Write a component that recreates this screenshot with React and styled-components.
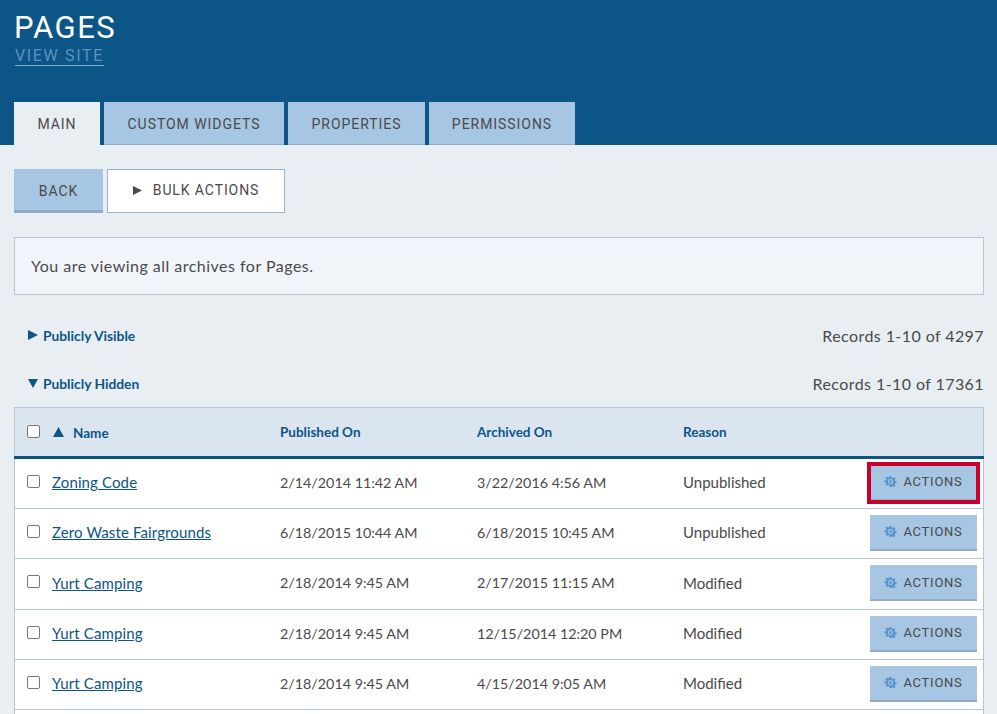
import styled, { createGlobalStyle } from "styled-components";

const GlobalStyle = createGlobalStyle`
  html, body {
    margin: 0;
    height: 714px;
    overflow: hidden;
    background: #e9eef2;
    font-family: Lato, "Liberation Sans", sans-serif;
    color: #4a4a4a;
  }
`;

const Header = styled.header`
  background: #0b5587;
  height: 145px;
  padding: 14px 14px 0;
  box-sizing: border-box;
  display: flex;
  flex-direction: column;
`;

const Title = styled.h1`
  margin: 0;
  font: 400 31px/28px Roboto, sans-serif;
  letter-spacing: 1.5px;
  color: #fff;
`;

const ViewSite = styled.a`
  align-self: flex-start;
  margin: 4px 0 0 1px;
  font: 400 16px/19px Roboto, sans-serif;
  letter-spacing: 1.65px;
  color: #5d93bd;
  border-bottom: 1px solid #7ba9cc;
`;

const Tabs = styled.nav`
  margin-top: auto;
  display: flex;
  gap: 4px;
`;

const Tab = styled.a`
  height: 43px;
  box-sizing: border-box;
  width: ${(p) => p.$width}px;
  padding-top: 2px;
  display: flex;
  align-items: center;
  justify-content: center;
  font: 400 14px/1 Roboto, sans-serif;
  letter-spacing: 0.95px;
  color: #4a4a4a;
  background: ${(p) => (p.$active ? "#e9eef2" : "#a7c6e3")};
  border-bottom: 1px solid ${(p) => (p.$active ? "#e9eef2" : "#93abc7")};
`;

const Main = styled.main`
  padding: 24px 13px 0 14px;
`;

const Toolbar = styled.div`
  display: flex;
  gap: 4px;
`;

const BackButton = styled.button`
  width: 89px;
  height: 44px;
  border: 0;
  border-bottom: 3px solid #8fabc8;
  background: #a7c6e3;
  font: 400 14px/1 Roboto, sans-serif;
  letter-spacing: 1px;
  color: #4a4a4a;
  padding: 2px 0 0;
`;

const BulkButton = styled.button`
  width: 178px;
  height: 44px;
  border: 1px solid #a3b3c6;
  background: #fff;
  font: 400 14px/1 Roboto, sans-serif;
  letter-spacing: 0.9px;
  color: #4a4a4a;
  padding: 0 0 2px;
  display: flex;
  align-items: center;
  justify-content: center;
  gap: 11px;
`;

const Notice = styled.div`
  margin-top: 24px;
  height: 58px;
  box-sizing: border-box;
  border: 1px solid #b4c5d6;
  background: #f1f5f9;
  padding: 0 16px 2px;
  display: flex;
  align-items: center;
  font-size: 16px;
  letter-spacing: 0.48px;
`;

const Section = styled.div`
  display: flex;
  justify-content: space-between;
  align-items: center;
  height: 24px;
  margin-top: ${(p) => p.$top}px;
`;

const SectionToggle = styled.a`
  display: flex;
  align-items: center;
  gap: 5px;
  margin-left: 14px;
  color: #0b5587;
  font-size: 13.8px;
  font-weight: 700;
`;

const RecordCount = styled.span`
  font-size: 16px;
  letter-spacing: 0.42px;
`;

const Table = styled.table`
  margin-top: 12px;
  width: 100%;
  border-collapse: collapse;
  table-layout: fixed;
  background: #fff;
  border: 1px solid #b4c5d6;
`;

const HeadRow = styled.tr`
  height: 50px;
  background: #dbe5f0;
  border-bottom: 3px solid #0b5587;
`;

const HeadCell = styled.th`
  text-align: left;
  padding: 0;
  width: ${(p) => (p.$width ? `${p.$width}px` : "auto")};
  color: #0b5587;
  font-size: 13.5px;
  font-weight: 700;
`;

const NameHead = styled.span`
  display: flex;
  align-items: center;
  gap: 9px;
  margin: 1px 0 0 1px;
  font-size: 13.5px;
`;

const Row = styled.tr`
  height: ${(p) => p.$height}px;
  border-bottom: 1px solid #b4c5d6;
`;

const Cell = styled.td`
  padding: 0 0 3px;
  font-size: 15px;
`;

const ActionCell = styled.td`
  padding: 0 0 2px;
  text-align: right;
`;

const DateCell = styled.td`
  padding: 0 0 3px;
  font-size: 14.3px;
`;

const CheckCell = styled.td`
  padding: 0 0 0 12px;
`;

const CheckHead = styled.th`
  padding: 0 0 0 12px;
  text-align: left;
  width: 25px;
`;

const Check = styled.span`
  display: block;
  width: 11px;
  height: 11px;
  border: 1px solid #767676;
  border-radius: 2px;
  background: #fff;
  margin-top: ${(p) => p.$top}px;
`;

const RecordLink = styled.a`
  color: #0b5587;
  text-decoration: underline;
  letter-spacing: 0.12px;
`;

const ActionButton = styled.button`
  width: 107px;
  height: 36px;
  margin-right: 6px;
  border: 0;
  border-bottom: 2px solid #8fabc8;
  background: #a7c6e3;
  display: inline-flex;
  align-items: center;
  justify-content: center;
  gap: 6px;
  padding: 0;
  font: 400 13px/1 Roboto, sans-serif;
  letter-spacing: 0.75px;
  color: #4a4a4a;
  vertical-align: middle;
  ${(p) => p.$focused && "outline: 4px solid #c8002d; outline-offset: -1px;"}
`;

const Triangle = ({ dir, size = 10, color = "#0b5587" }) => {
  const points = {
    right: "0,0 10,5 0,10",
    down: "0,1 10,1 5,10",
    up: "0,9 10,9 5,0",
  };
  return (
    <svg width={size} height={size} viewBox="0 0 10 10" fill={color}>
      <polygon points={points[dir]} />
    </svg>
  );
};

const Gear = () => (
  <svg width="13" height="13" viewBox="-1 -1 26 26" fill="#5b97cf">
    <path d="M10 1h4l.6 3.2 2 .8 2.7-1.8 2.8 2.8-1.8 2.7.8 2 3.2.6v4l-3.2.6-.8 2 1.8 2.7-2.8 2.8-2.7-1.8-2 .8L14 23h-4l-.6-3.2-2-.8-2.7 1.8-2.8-2.8 1.8-2.7-.8-2L-.3 14v-4l3.2-.6.8-2L1.9 4.7l2.8-2.8 2.7 1.8 2-.8z" />
    <circle cx="12" cy="12" r="5" fill="#a7c6e3" />
    <circle cx="12" cy="12" r="3" />
  </svg>
);

// rows in the source are not a whole number of pixels tall
const records = [
  ["Zoning Code", "2/14/2014 11:42 AM", "3/22/2016 4:56 AM", "Unpublished", 51],
  ["Zero Waste Fairgrounds", "6/18/2015 10:44 AM", "6/18/2015 10:45 AM", "Unpublished", 50],
  ["Yurt Camping", "2/18/2014 9:45 AM", "2/17/2015 11:15 AM", "Modified", 51],
  ["Yurt Camping", "2/18/2014 9:45 AM", "12/15/2014 12:20 PM", "Modified", 50],
  ["Yurt Camping", "2/18/2014 9:45 AM", "4/15/2014 9:05 AM", "Modified", 50],
];

export default function App() {
  return (
    <>
      <GlobalStyle />
      <Header>
        <Title>PAGES</Title>
        <ViewSite>VIEW SITE</ViewSite>
        <Tabs>
          <Tab $active $width={86}>MAIN</Tab>
          <Tab $width={180}>CUSTOM WIDGETS</Tab>
          <Tab $width={137}>PROPERTIES</Tab>
          <Tab $width={146}>PERMISSIONS</Tab>
        </Tabs>
      </Header>
      <Main>
        <Toolbar>
          <BackButton>BACK</BackButton>
          <BulkButton>
            <Triangle dir="right" size={9} color="#4a4a4a" />
            BULK ACTIONS
          </BulkButton>
        </Toolbar>
        <Notice>You are viewing all archives for Pages.</Notice>
        <Section $top={28}>
          <SectionToggle>
            <Triangle dir="right" />
            Publicly Visible
          </SectionToggle>
          <RecordCount>Records 1-10 of 4297</RecordCount>
        </Section>
        <Section $top={24}>
          <SectionToggle>
            <Triangle dir="down" />
            Publicly Hidden
          </SectionToggle>
          <RecordCount>Records 1-10 of 17361</RecordCount>
        </Section>
        <Table>
          <thead>
            <HeadRow>
              <CheckHead><Check $top={-1} /></CheckHead>
              <HeadCell $width={228}>
                <NameHead>
                  <Triangle dir="up" size={11} />
                  Name
                </NameHead>
              </HeadCell>
              <HeadCell $width={197}>Published On</HeadCell>
              <HeadCell $width={206}>Archived On</HeadCell>
              <HeadCell $width={130}>Reason</HeadCell>
              <HeadCell />
            </HeadRow>
          </thead>
          <tbody>
            {records.map((r, i) => (
              <Row key={i} $height={r[4]}>
                <CheckCell><Check $top={-5} /></CheckCell>
                <Cell><RecordLink>{r[0]}</RecordLink></Cell>
                <DateCell>{r[1]}</DateCell>
                <DateCell>{r[2]}</DateCell>
                <Cell>{r[3]}</Cell>
                <ActionCell>
                  <ActionButton $focused={i === 0}>
                    <Gear />
                    ACTIONS
                  </ActionButton>
                </ActionCell>
              </Row>
            ))}
            {/* next row runs off the bottom of the window */}
            <Row $height={50}>
              <Cell colSpan={6} />
            </Row>
          </tbody>
        </Table>
      </Main>
    </>
  );
}
